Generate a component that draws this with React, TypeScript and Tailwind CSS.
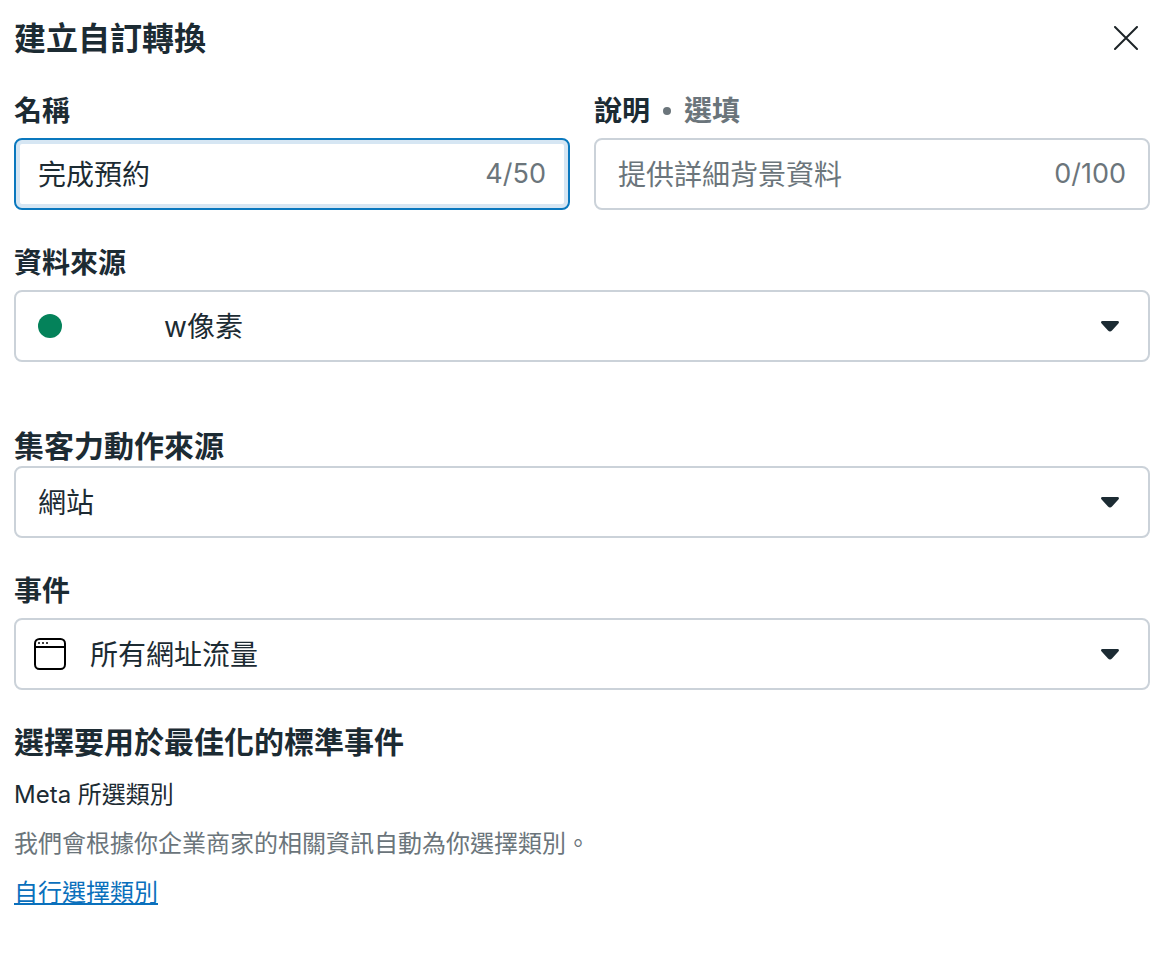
import { useState, type ReactNode } from 'react';

const fieldClass =
  'block h-[72px] w-full appearance-none rounded-lg border-2 border-[#cbd2d9] bg-white text-[28px] leading-10 text-[#1c2b33] outline-none placeholder:text-[#6b757b] placeholder:opacity-100';

const labelClass = 'block text-[28px] leading-[42px] font-bold';

function CountedInput({
  id,
  label,
  optional = false,
  initial = '',
  placeholder,
  max,
  active = false,
}: {
  id: string;
  label: string;
  optional?: boolean;
  initial?: string;
  placeholder?: string;
  max: number;
  active?: boolean;
}) {
  const [value, setValue] = useState(initial);
  return (
    <div className="min-w-0 flex-1">
      <label htmlFor={id} className="flex items-center gap-[13px] text-[28px] leading-[42px] font-bold">
        <span>{label}</span>
        {optional && (
          <>
            <span className="size-2 rounded-full bg-[#6b757b]" />
            <span className="text-[#6b757b]">選填</span>
          </>
        )}
      </label>
      <div className="relative mt-1.5">
        <input
          id={id}
          type="text"
          value={value}
          maxLength={max}
          placeholder={placeholder}
          onChange={(e) => setValue(e.target.value)}
          className={`${fieldClass} pr-28 pb-0.5 pl-[22px] font-['Noto_Sans_CJK_TC',sans-serif] ${
            active ? 'border-[#0a78be]! shadow-[inset_0_0_0_4px_#d6e6f3]' : ''
          }`}
        />
        <span className="pointer-events-none absolute inset-y-0 right-6 flex items-center text-[27px] text-[#6b757b]">
          {value.length}/{max}
        </span>
      </div>
    </div>
  );
}

function SelectField({
  id,
  option,
  indent,
  adornment,
}: {
  id: string;
  option: string;
  indent: string;
  adornment?: ReactNode;
}) {
  return (
    <div className="relative">
      <select id={id} className={`${fieldClass} pt-0.5 pr-16 ${indent}`}>
        <option>{option}</option>
      </select>
      {adornment && (
        <span className="pointer-events-none absolute inset-y-0 left-5 flex items-center">{adornment}</span>
      )}
      <span className="pointer-events-none absolute inset-y-0 right-[30px] flex items-center">
        <svg width="20" height="12" viewBox="0 0 20 12" fill="#1c2b33" aria-hidden="true">
          <path d="M2.4 1.1h15.2c1.3 0 1.8 1.3 1 2.2l-6.6 7.1c-1.2 1.3-2.8 1.3-4 0L1.4 3.3c-.8-.9-.3-2.2 1-2.2z" />
        </svg>
      </span>
    </div>
  );
}

function BrowserIcon() {
  return (
    <svg width="32" height="32" viewBox="0 0 32 32" fill="none" stroke="#000" strokeWidth="2" aria-hidden="true">
      <rect x="1" y="1" width="30" height="30" rx="4.5" />
      <path d="M1 9h30" />
      <g fill="#000" stroke="none">
        <circle cx="5" cy="5" r="1" />
        <circle cx="9" cy="5" r="1" />
        <circle cx="13" cy="5" r="1" />
      </g>
    </svg>
  );
}

export default function App() {
  return (
    <form className="min-h-screen bg-white pt-[18px] pr-5 pb-8 pl-3.5 font-['Inter','Noto_Sans_CJK_TC',sans-serif] text-[#1c2b33]">
      <header className="flex items-start justify-between">
        <h1 className="text-[32px] leading-[42px] font-bold">建立自訂轉換</h1>
        <button type="button" aria-label="關閉" className="-mr-1 flex h-10 w-14 items-center justify-center">
          <svg width="24" height="24" viewBox="0 0 24 24" fill="none" stroke="#1c2327" strokeWidth="2" strokeLinecap="round" aria-hidden="true">
            <path d="M1 1l22 22M23 1L1 23" />
          </svg>
        </button>
      </header>

      <div className="mt-[30px] flex gap-6">
        <CountedInput id="name" label="名稱" initial="完成預約" max={50} active />
        <CountedInput id="description" label="說明" optional placeholder="提供詳細背景資料" max={100} />
      </div>

      <div className="mt-8">
        <label htmlFor="source" className={labelClass}>資料來源</label>
        <div className="mt-1.5">
          <SelectField
            id="source"
            option="w像素"
            indent="pl-[148px]"
            adornment={<span className="ml-1 size-6 rounded-full bg-[#04825a]" />}
          />
        </div>
      </div>

      <div className="mt-16">
        <label htmlFor="action-source" className="block text-[30px] leading-10 font-bold">集客力動作來源</label>
        <SelectField id="action-source" option="網站" indent="pl-[22px]" />
      </div>

      <div className="mt-8">
        <label htmlFor="event" className={labelClass}>事件</label>
        <div className="mt-1.5">
          <SelectField id="event" option="所有網址流量" indent="pl-[74px]" adornment={<BrowserIcon />} />
        </div>
      </div>

      <section className="mt-8 text-2xl leading-[34px]">
        <h2 className="text-[30px] leading-10 font-bold">選擇要用於最佳化的標準事件</h2>
        <div className="mt-4 flex flex-col items-start gap-[15px]">
          <p>Meta 所選類別</p>
          <p className="text-[#6b757b]">我們會根據你企業商家的相關資訊自動為你選擇類別。</p>
          <a href="#categories" className="text-[#0a70bc] underline decoration-2 underline-offset-2">自行選擇類別</a>
        </div>
      </section>
    </form>
  );
}
